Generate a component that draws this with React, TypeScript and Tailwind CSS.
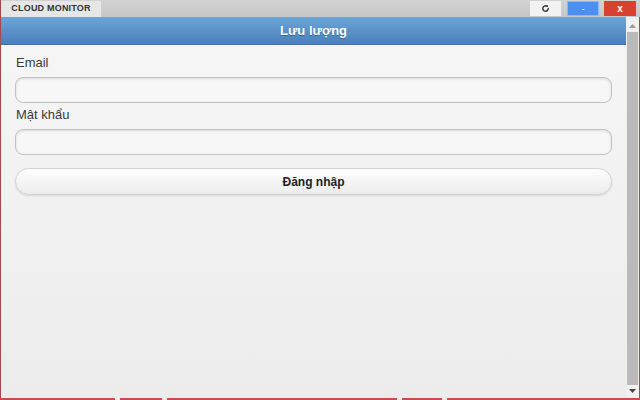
import React from "react";

export default function App() {
  return (
    <div className="w-[640px] h-[400px] flex flex-col overflow-hidden bg-[#c4c4c4] font-['Liberation_Sans',Arial,sans-serif]">
      {/* title bar */}
      <div className="h-[17px] flex items-stretch bg-gradient-to-b from-[#d2d2d2] to-[#c6c6c6] border-l border-[#a84848]">
        <div className="w-[100px] mt-[1px] bg-[#e6e6e6] flex items-center justify-center text-[9px] font-bold text-[#333] tracking-[0.2px]">
          CLOUD MONITOR
        </div>
        <div className="flex-1" />
        <div className="w-[31px] mt-[1px] mb-[1px] bg-[#f2f2f2] flex items-center justify-center">
          <svg width="9" height="9" viewBox="0 0 10 10" fill="none">
            <path d="M8 5a3 3 0 1 1-1.2-2.4" stroke="#333" strokeWidth="1.6" strokeLinecap="round" />
            <path d="M7.2 0.8 L7.6 3.4 L5 3.4 Z" fill="#333" />
          </svg>
        </div>
        <div className="w-[6px]" />
        <div className="w-[32px] mt-[1px] mb-[1px] bg-[#4b8ff0] border border-[#8fb6f0] flex items-center justify-center text-white text-[8px] font-bold leading-none">
          -
        </div>
        <div className="w-[5px]" />
        <div className="w-[32px] mt-[1px] mb-[1px] bg-[#d8412f] flex items-center justify-center text-white text-[10px] font-bold leading-none">
          x
        </div>
        <div className="w-[4px]" />
      </div>

      {/* main */}
      <div className="flex-1 flex min-h-0">
        <div className="w-[1px] bg-[#a84848]" />
        <div className="flex-1 flex flex-col bg-gradient-to-b from-[#f6f6f6] to-[#ececec]">
          <div className="h-[28px] flex items-center justify-center bg-gradient-to-b from-[#6ca6d8] to-[#4a80b9] border-b border-[#3f6fa3] text-white font-bold text-[13px] [text-shadow:0_1px_1px_rgba(0,0,0,0.3)]">
            Lưu lượng
          </div>
          <div className="flex flex-col px-[14px] pt-[10px]">
            <label className="text-[13px] text-[#3a3a3a] leading-[16px] pl-[1px]">Email</label>
            <div className="mt-[6px] h-[26px] rounded-[8px] border border-[#c2c2c2] bg-[#f7f7f7] shadow-[inset_0_1px_3px_rgba(0,0,0,0.12)]" />
            <label className="mt-[4px] text-[13px] text-[#3a3a3a] leading-[16px] pl-[1px]">Mật khẩu</label>
            <div className="mt-[6px] h-[26px] rounded-[8px] border border-[#c2c2c2] bg-[#f7f7f7] shadow-[inset_0_1px_3px_rgba(0,0,0,0.12)]" />
            <button className="mt-[13px] h-[27px] rounded-[14px] border border-[#d2d2d2] bg-gradient-to-b from-[#fdfdfd] to-[#ececec] shadow-[0_1px_2px_rgba(0,0,0,0.12)] text-[12px] font-bold text-[#222] flex items-center justify-center">
              Đăng nhập
            </button>
          </div>
        </div>
        {/* scrollbar */}
        <div className="w-[13px] flex flex-col bg-[#f0f0f0] pt-[4px] pb-[2px]">
          <div className="h-[10px] flex items-center justify-center">
            <svg width="7" height="4" viewBox="0 0 7 4"><path d="M0 4 L3.5 0 L7 4 Z" fill="#999" /></svg>
          </div>
          <div className="flex-1 mx-[1px] my-[1px] bg-[#bababa]" />
          <div className="h-[10px] flex items-center justify-center">
            <svg width="7" height="4" viewBox="0 0 7 4"><path d="M0 0 L7 0 L3.5 4 Z" fill="#444" /></svg>
          </div>
        </div>
        <div className="w-[1px] bg-[#a84848]" />
      </div>
      <div className="h-[2px] bg-[#d24848] flex">
        <div className="w-[115px]" />
        <div className="w-[5px] bg-[#ececec]" />
        <div className="w-[42px]" />
        <div className="w-[5px] bg-[#ececec]" />
        <div className="w-[230px]" />
        <div className="w-[5px] bg-[#ececec]" />
        <div className="w-[40px]" />
        <div className="w-[5px] bg-[#ececec]" />
      </div>
    </div>
  );
}
